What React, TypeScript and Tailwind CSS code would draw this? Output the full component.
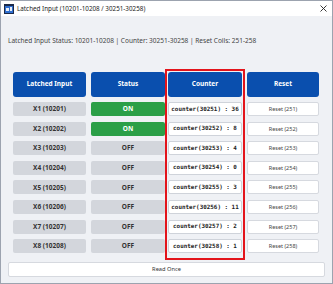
import React from "react";

const rows = [
  { x: "X1 (10201)", on: true, counter: "counter(30251) : 36", reset: "Reset (251)" },
  { x: "X2 (10202)", on: true, counter: "counter(30252) : 8", reset: "Reset (252)" },
  { x: "X3 (10203)", on: false, counter: "counter(30253) : 4", reset: "Reset (253)" },
  { x: "X4 (10204)", on: false, counter: "counter(30254) : 0", reset: "Reset (254)" },
  { x: "X5 (10205)", on: false, counter: "counter(30255) : 3", reset: "Reset (255)" },
  { x: "X6 (10206)", on: false, counter: "counter(30256) : 11", reset: "Reset (256)" },
  { x: "X7 (10207)", on: false, counter: "counter(30257) : 2", reset: "Reset (257)" },
  { x: "X8 (10208)", on: false, counter: "counter(30258) : 1", reset: "Reset (258)" },
];

const header =
  "h-[25px] rounded-[3px] bg-[#0a4fae] text-white font-bold text-[6.5px] flex items-center justify-center";
const cell = "h-[14px] rounded-[2px] flex items-center justify-center";

export default function App() {
  return (
    <div
      className="w-[333px] h-[284px] bg-[#eff1f5] border border-[#9ca3af] flex flex-col text-[#333]"
      style={{ fontFamily: "'Noto Sans', 'Open Sans', sans-serif" }}
    >
      {/* title bar */}
      <div className="h-[15px] bg-white flex items-center pl-[3px] pr-[5px]">
        <svg width="10" height="10" viewBox="0 0 10 10">
          <rect x="0" y="0" width="10" height="10" fill="#1b2a4a" />
          <rect x="1" y="2" width="8" height="7" fill="#2f6fd0" />
          <rect x="2" y="4" width="3" height="3" fill="#e8eef8" />
          <rect x="6" y="3" width="2" height="4" fill="#e8eef8" />
        </svg>
        <span className="ml-[3px] text-[6.3px] text-[#222]">Latched Input (10201-10208 / 30251-30258)</span>
        <svg className="ml-auto" width="7" height="7" viewBox="0 0 7 7">
          <path d="M0.5 0.5 L6.5 6.5 M6.5 0.5 L0.5 6.5" stroke="#222" strokeWidth="0.9" />
        </svg>
      </div>

      <div className="pl-[7px] pt-[22px] text-[6.5px] text-[#444] leading-none">
        Latched Input Status: 10201-10208 | Counter: 30251-30258 | Reset Coils: 251-258
      </div>

      <div className="flex mt-[24px] ml-[12px]">
        <div className="w-[73px] mt-[3px] flex flex-col gap-[5.6px]">
          <div className={header}>Latched Input</div>
          {rows.map((r) => (
            <div key={r.x} className={`${cell} bg-[#d3d6dc] font-bold text-[6.5px] text-[#333]`}>
              {r.x}
            </div>
          ))}
        </div>
        <div className="w-[74px] ml-[5px] mt-[3px] flex flex-col gap-[5.6px]">
          <div className={header}>Status</div>
          {rows.map((r) => (
            <div
              key={r.x}
              className={`${cell} font-bold text-[6.5px] ${r.on ? "bg-[#2b9f47] text-white" : "bg-[#d3d6dc] text-[#333]"}`}
            >
              {r.on ? "ON" : "OFF"}
            </div>
          ))}
        </div>
        <div className="w-[80px] border-[2px] border-[#e3141b] px-[1px] pt-[1px] pb-[5px] flex flex-col gap-[5.6px]">
          <div className={header}>Counter</div>
          {rows.map((r) => (
            <div
              key={r.x}
              className={`${cell} bg-white border border-[#cfd3da] font-bold text-[5.9px] text-[#222]`}
              style={{ fontFamily: "'DejaVu Sans Mono', 'Liberation Mono', monospace" }}
            >
              {r.counter}
            </div>
          ))}
        </div>
        <div className="w-[72px] ml-[2px] mt-[3px] flex flex-col gap-[5.6px]">
          <div className={header}>Reset</div>
          {rows.map((r) => (
            <div key={r.x} className={`${cell} bg-white border border-[#d6d9df] text-[5.5px] text-[#444]`}>
              {r.reset}
            </div>
          ))}
        </div>
      </div>

      <div className="mx-[7px] mt-[2px] h-[15px] rounded-[2px] bg-white border border-[#d6d9df] flex items-center justify-center text-[5.7px] text-[#333]">
        Read Once
      </div>
    </div>
  );
}
